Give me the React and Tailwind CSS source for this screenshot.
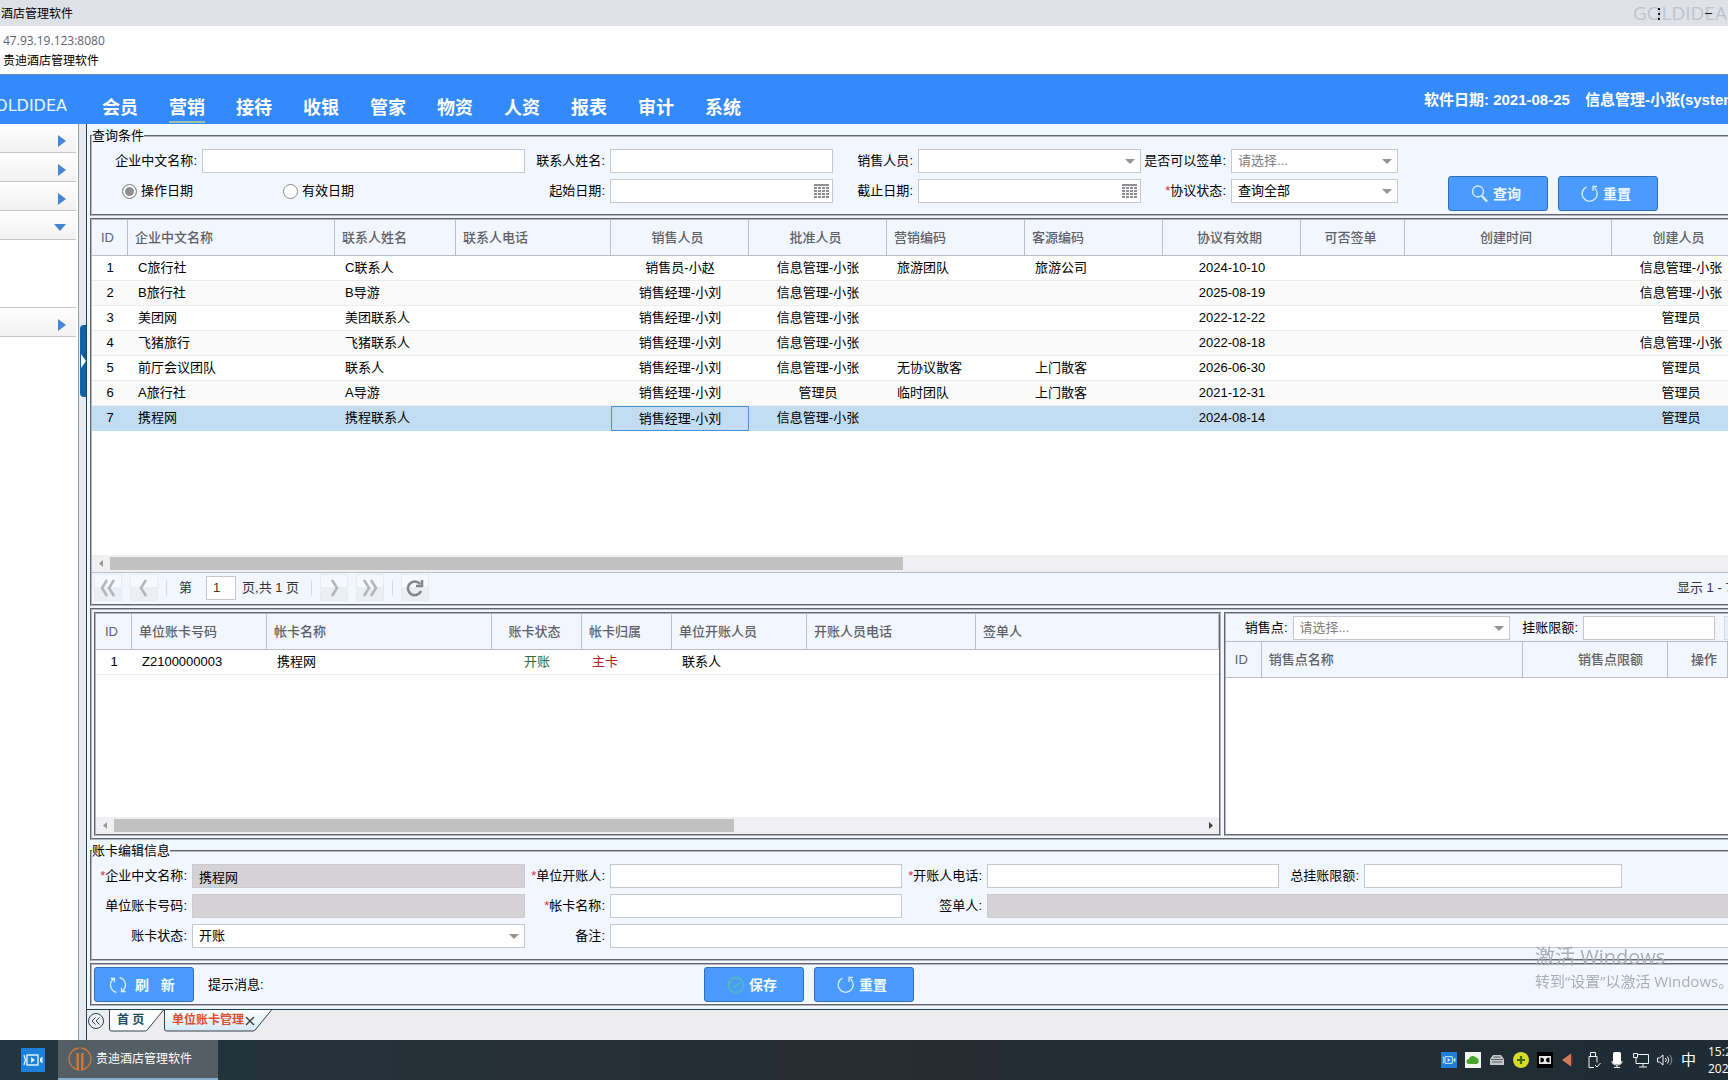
import React, { useState } from 'react'

const navItems = ['会员', '营销', '接待', '收银', '管家', '物资', '人资', '报表', '审计', '系统']

const agreementColumns = [
  { title: 'ID', width: 36, align: 'center' },
  { title: '企业中文名称', width: 207 },
  { title: '联系人姓名', width: 121 },
  { title: '联系人电话', width: 155 },
  { title: '销售人员', width: 138, align: 'center' },
  { title: '批准人员', width: 138, align: 'center' },
  { title: '营销编码', width: 138 },
  { title: '客源编码', width: 138 },
  { title: '协议有效期', width: 138, align: 'center' },
  { title: '可否签单', width: 104, align: 'center' },
  { title: '创建时间', width: 207, align: 'center' },
  { title: '创建人员', width: 138, align: 'center' },
]

const agreements = [
  ['1', 'C旅行社', 'C联系人', '', '销售员-小赵', '信息管理-小张', '旅游团队', '旅游公司', '2024-10-10', '', '', '信息管理-小张'],
  ['2', 'B旅行社', 'B导游', '', '销售经理-小刘', '信息管理-小张', '', '', '2025-08-19', '', '', '信息管理-小张'],
  ['3', '美团网', '美团联系人', '', '销售经理-小刘', '信息管理-小张', '', '', '2022-12-22', '', '', '管理员'],
  ['4', '飞猪旅行', '飞猪联系人', '', '销售经理-小刘', '信息管理-小张', '', '', '2022-08-18', '', '', '信息管理-小张'],
  ['5', '前厅会议团队', '联系人', '', '销售经理-小刘', '信息管理-小张', '无协议散客', '上门散客', '2026-06-30', '', '', '管理员'],
  ['6', 'A旅行社', 'A导游', '', '销售经理-小刘', '管理员', '临时团队', '上门散客', '2021-12-31', '', '', '管理员'],
  ['7', '携程网', '携程联系人', '', '销售经理-小刘', '信息管理-小张', '', '', '2024-08-14', '', '', '管理员'],
]

const cardColumns = [
  { title: 'ID', width: 36, align: 'center' },
  { title: '单位账卡号码', width: 135 },
  { title: '帐卡名称', width: 225 },
  { title: '账卡状态', width: 90, align: 'center', color: 'text-[#2f6b3a]' },
  { title: '帐卡归属', width: 90, color: 'text-[#b3222a]' },
  { title: '单位开账人员', width: 135 },
  { title: '开账人员电话', width: 169 },
  { title: '签单人' },
]

const cards = [['1', 'Z2100000003', '携程网', '开账', '主卡', '联系人', '', '']]

const pointColumns = [
  { title: 'ID', width: 36, align: 'center' },
  { title: '销售点名称' },
  { title: '销售点限额', width: 145, align: 'right' },
  { title: '操作', width: 60, align: 'end' },
]

const headAligns = { left: 'text-left pl-[7px]', center: 'text-center pr-1', right: 'text-right pr-6', end: 'text-right pr-2.5' }
const cellAligns = { left: 'text-left pl-2.5', center: 'text-center', right: 'text-right pr-6', end: 'text-right pr-2.5' }

const DataTable = ({ columns, rows, width, selected, focusCol, label }) => (
  <table aria-label={label} className='table-fixed w-full border-separate border-spacing-0 text-[13px] leading-[22px]' style={{ width }}>
    <colgroup>
      {columns.map((c) => <col key={c.title} style={{ width: c.width }} />)}
    </colgroup>
    <thead>
      <tr className='h-9 bg-[#f2f7ff] text-[#5f6166]'>
        {columns.map((c) => (
          <th key={c.title} className={`border-b border-r border-[#bcbec6] py-0 font-medium whitespace-nowrap ${headAligns[c.align || 'left']}`}>{c.title}</th>
        ))}
      </tr>
    </thead>
    <tbody>
      {rows.map((row, i) => (
        <tr key={row[0]} className={i === selected ? 'bg-[#c2dcf1]' : i % 2 ? 'bg-[#fafafa]' : 'bg-white'}>
          {row.map((cell, j) => (
            <td
              key={j}
              className={`h-[25px] py-0 whitespace-nowrap ${cellAligns[columns[j].align || 'left']} ${columns[j].color || 'text-black'} ${i === selected ? (j === focusCol ? 'border border-[#4a90d0]' : 'border-b border-[#c2dcf1]') : 'border-b border-[#ececec]'}`}
            >{cell}</td>
          ))}
        </tr>
      ))}
    </tbody>
  </table>
)

const ScrollBar = ({ thumb, rightArrow }) => (
  <div className='flex items-center h-[17px] shrink-0 bg-[#f0eff1]'>
    <svg className='w-[18px] h-[17px]' viewBox='0 0 18 17'><path d='M11 5v7l-4-3.500z' fill='#9a9a9a' /></svg>
    <div className='grow'><div className='h-[13px] bg-[#c1c1c1]' style={{ width: thumb }}></div></div>
    {rightArrow && <svg className='w-[17px] h-[17px]' viewBox='0 0 17 17'><path d='M7 5v7l4-3.500z' fill='#444' /></svg>}
  </div>
)

const Label = ({ htmlFor, required, children }) => (
  <label htmlFor={htmlFor} className='pr-[5px] text-right whitespace-nowrap'>
    {required && <span className='text-[#d03040]'>*</span>}{children}:
  </label>
)

const Input = ({ className = '', ...rest }) => (
  <input className={`block w-full min-w-0 h-6 px-1.5 border outline-none ${rest.disabled ? 'bg-[#d4d2d5] border-[#cbcbd0]' : 'bg-white border-[#c5c8d0]'} ${className}`} {...rest} />
)

const Select = ({ id, options, muted }) => (
  <div className='relative'>
    <select id={id} className={`block w-full h-6 px-1.5 appearance-none bg-white border border-[#c5c8d0] outline-none ${muted ? 'text-[#808080]' : 'text-black'}`}>
      {options.map((o) => <option key={o}>{o}</option>)}
    </select>
    <svg className='absolute right-1.5 top-2.5 w-2.5 h-[5px] pointer-events-none' viewBox='0 0 10 5'><path d='M0 0h10l-5 5z' fill='#939399' /></svg>
  </div>
)

const DateInput = ({ id }) => (
  <div className='relative'>
    <Input id={id} type='text' />
    <svg className='absolute right-1 top-[5px] w-[15px] h-[14px] pointer-events-none' viewBox='0 0 15 14' fill='#8e8e93'>
      <path d='M0 0h15v2H0z' />
      {[3, 6, 9, 12].map((y) => [0, 4, 8, 12].map((x) => <rect key={x + '-' + y} x={x} y={y} width='3' height='2' />))}
    </svg>
  </div>
)

const ResetIcon = () => (
  <svg className='w-[18px] h-[18px]' viewBox='0 0 18 18' fill='none' stroke='#d8f2ff' strokeWidth='1.3'>
    <path d='M5.500 2A7.500 7.500 0 1 0 13.500 3' />
    <path d='M16 1.500h-4v4.500' />
  </svg>
)

const SearchIcon = () => (
  <svg className='w-[18px] h-[18px]' viewBox='0 0 18 18' fill='none' stroke='#d8f2ff'>
    <circle cx='7' cy='6.500' r='5.500' strokeWidth='1.300' />
    <path d='M11 11l5 5.500' strokeWidth='2.400' />
  </svg>
)

const SaveIcon = () => (
  <svg className='w-[18px] h-[18px]' viewBox='0 0 18 18' fill='none' stroke='#4fbfae' strokeWidth='1.4'>
    <circle cx='9' cy='9' r='7.500' />
    <path d='M5.500 9l2.500 2.500 5-5' />
  </svg>
)

const RefreshIcon = () => (
  <svg className='w-[18px] h-[18px]' viewBox='0 0 18 18' fill='none' stroke='#d8f2ff' strokeWidth='1.3'>
    <path d='M7.500 16.300A7.500 7.500 0 0 1 4.500 3M1.500 2.500H5.500v4' />
    <path d='M10.500 1.700a7.500 7.500 0 0 1 3 13.300M16.500 15.500H12.500v-4' />
  </svg>
)

const BlueButton = ({ icon, children }) => (
  <button type='button' className='flex items-center justify-center gap-1 w-[100px] h-[35px] pr-1 rounded-[3px] border border-[#3070b8] bg-[#4a9aff] text-[14px] font-bold text-[#eefaff] whitespace-pre'>
    {icon}{children}
  </button>
)

const PagerButton = ({ label, d, dark }) => (
  <button type='button' aria-label={label} className='flex items-center justify-center w-7 h-[27px] border border-[#e6eaf1] bg-gradient-to-b from-[#f6f9ff] from-50% to-[#ebeef3] to-50%'>
    <svg className='w-[18px] h-[18px]' viewBox='0 0 18 18' fill='none' stroke={dark ? '#85868a' : '#b4b6bd'} strokeWidth='2.6'><path d={d} /></svg>
  </button>
)

const SideRow = ({ open, label }) => (
  <button type='button' aria-label={label} className='flex items-center justify-end w-[76px] h-[29px] pt-[5px] pr-2.5 border-b border-[#c4c5c9] bg-gradient-to-b from-white to-[#f1f1f2]'>
    {open
      ? <svg className='w-[12px] h-[7px]' viewBox='0 0 12 7'><path d='M0 0h12L6 7z' fill='#4385d6' /></svg>
      : <svg className='w-[8px] h-[12px]' viewBox='0 0 8 12'><path d='M0 0l8 6-8 6z' fill='#4385d6' /></svg>}
  </button>
)

const VideoIcon = ({ className }) => (
  <svg className={className} viewBox='0 0 24 24'>
    <rect width='24' height='24' rx='1' fill='#1f7fdb' />
    <path d='M3 7l1.500 5L3 17M6 7h11v10H6z' fill='none' stroke='#d9f4ff' strokeWidth='1.400' />
    <path d='M10 9l4 3-4 3zM19 10.500l2.500-2v7l-2.500-2z' fill='#d9f4ff' />
  </svg>
)

const Sidebar = () => (
  <aside className='flex shrink-0'>
    <div className='w-[79px] border-r border-[#929aa6] bg-white'>
      <SideRow label='菜单一' />
      <SideRow label='菜单二' />
      <SideRow label='菜单三' />
      <SideRow label='菜单四' open />
      <div className='w-[76px] h-[68px] border-b border-[#c4c5c9]'></div>
      <SideRow label='菜单五' />
    </div>
    <div className='w-2 border-r border-[#1f4254] bg-[#e7ebf1] pt-[201px] pl-px'>
      <button type='button' aria-label='展开' className='flex items-center justify-center w-1.5 h-[72px] rounded-l-sm bg-[#0f62a4]'>
        <svg className='w-[5px] h-[14px]' viewBox='0 0 5 14'><path d='M0 0l5 7-5 7z' fill='#fff' /></svg>
      </button>
    </div>
  </aside>
)

const panel = 'border-2 border-[#b4b6bf] [border-style:groove]'

const QueryForm = () => {
  const [dateType, setDateType] = useState('op')
  const radio = 'appearance-none w-[15px] h-[15px] rounded-full border border-[#8a8a8a] bg-white checked:bg-[#8f8f93] checked:shadow-[inset_0_0_0_2px_#fff]'

  return (
    <fieldset className={`min-w-0 border-r-0 bg-[#f2f7ff] ${panel}`}>
      <legend className='leading-[18px]'>查询条件</legend>
      <div className='flex items-start gap-[50px] pt-1 pb-[3px]'>
        <div className='grid grid-cols-[110px_323px_85px_223px_85px_223px_90px_167px] gap-y-1.5 items-center'>
          <Label htmlFor='company'>企业中文名称</Label>
          <Input id='company' />
          <Label htmlFor='contact'>联系人姓名</Label>
          <Input id='contact' />
          <Label htmlFor='seller'>销售人员</Label>
          <Select id='seller' options={['']} />
          <Label htmlFor='sign'>是否可以签单</Label>
          <Select id='sign' options={['请选择...']} muted />
          <div className='col-span-2 flex h-6 pl-[30px]'>
            <label className='flex items-center gap-1 w-[161px]'>
              <input type='radio' name='dateType' className={radio} checked={dateType === 'op'} onChange={() => setDateType('op')} />操作日期
            </label>
            <label className='flex items-center gap-1'>
              <input type='radio' name='dateType' className={radio} checked={dateType === 'valid'} onChange={() => setDateType('valid')} />有效日期
            </label>
          </div>
          <Label htmlFor='start'>起始日期</Label>
          <DateInput id='start' />
          <Label htmlFor='end'>截止日期</Label>
          <DateInput id='end' />
          <Label htmlFor='state' required>协议状态</Label>
          <Select id='state' options={['查询全部']} />
        </div>
        <div className='flex gap-2.5 pt-[27px]'>
          <BlueButton icon={<SearchIcon />}>查询</BlueButton>
          <BlueButton icon={<ResetIcon />}>重置</BlueButton>
        </div>
      </div>
    </fieldset>
  )
}

const Separator = () => <span className='w-px h-4 mx-2 bg-[#d5d9e1]'></span>

const Pager = () => (
  <div className='flex items-center justify-between h-8 shrink-0 pb-0.5 border-t border-[#bcbec6] bg-[#f2f7ff] pl-0.5 text-[#333]'>
    <div className='flex items-center'>
      <PagerButton label='首页' d='M8 1L3 9l5 8M15 1l-5 8 5 8' />
      <span className='w-2'></span>
      <PagerButton label='上一页' d='M11 1L6 9l5 8' />
      <Separator />
      <label htmlFor='page' className='px-1'>第</label>
      <Input id='page' defaultValue='1' className='ml-2.5 max-w-[30px]' />
      <span className='pl-1.5 pr-1 whitespace-nowrap'>页,共 1 页</span>
      <Separator />
      <PagerButton label='下一页' d='M7 1l5 8-5 8' />
      <span className='w-2'></span>
      <PagerButton label='末页' d='M3 1l5 8-5 8M10 1l5 8-5 8' />
      <Separator />
      <PagerButton label='刷新列表' d='M15 12A6.800 6.800 0 1 1 14 5M10 7H16V1' dark />
    </div>
    <span className='w-[51px] overflow-hidden whitespace-nowrap'>显示 1 - 7</span>
  </div>
)

const AccountForm = () => (
  <fieldset className={`min-w-0 border-r-0 bg-[#f2f7ff] ${panel}`}>
    <legend className='leading-[18px]'>账卡编辑信息</legend>
    <div className='grid grid-cols-[100px_333px_85px_292px_85px_292px_85px_258px_1fr] gap-y-1.5 items-center pt-1 pb-[11px]'>
      <Label htmlFor='unit' required>企业中文名称</Label>
      <Input id='unit' defaultValue='携程网' disabled />
      <Label htmlFor='opener' required>单位开账人</Label>
      <Input id='opener' />
      <Label htmlFor='phone' required>开账人电话</Label>
      <Input id='phone' />
      <Label htmlFor='limit'>总挂账限额</Label>
      <Input id='limit' />
      <span></span>
      <Label htmlFor='cardNo'>单位账卡号码</Label>
      <Input id='cardNo' disabled />
      <Label htmlFor='cardName' required>帐卡名称</Label>
      <Input id='cardName' />
      <Label htmlFor='signer'>签单人</Label>
      <div className='col-span-4'><Input id='signer' className='border-r-0' disabled /></div>
      <Label htmlFor='cardState'>账卡状态</Label>
      <Select id='cardState' options={['开账']} />
      <Label htmlFor='remark'>备注</Label>
      <div className='col-span-6'><Input id='remark' className='border-r-0' /></div>
    </div>
  </fieldset>
)

const TabBar = () => (
  <div className='flex h-[31px] border-t border-[#1f4254] bg-[#ededef] pl-px'>
    <button type='button' aria-label='向左滚动' className='mt-[3px] w-4 h-4'>
      <svg viewBox='0 0 16 16' fill='none' stroke='#274a5c'><circle cx='8' cy='8' r='7.500' /><path d='M7.500 4.500L4 8l3.500 3.500M11.500 4.500L8 8l3.500 3.500' /></svg>
    </button>
    <a href='#home' className='relative ml-[5px] w-[55px] h-[22px] pl-2 leading-[20px] text-[12px] font-bold text-[#1c4a63]'>
      <svg className='absolute inset-0 w-full h-full' viewBox='0 0 55 22'><path d='M.5 0v19q0 2 2 2H36q2 0 3-2L54.500 0' fill='#fbfcfd' stroke='#3a4046' /></svg>
      <span className='relative'>首 页</span>
    </a>
    <a href='#account' className='relative w-[108px] h-[22px] pl-2 leading-[20px] text-[12px] font-bold text-[#d9502f] whitespace-nowrap'>
      <svg className='absolute inset-0 w-full h-full' viewBox='0 0 108 22'>
        <defs><linearGradient id='tab' x1='0' y1='0' x2='0' y2='1'><stop offset='0' stopColor='#fff' /><stop offset='1' stopColor='#d3e9f6' /></linearGradient></defs>
        <path d='M.5 0v19q0 2 2 2H89q2 0 3-2L107.500 0' fill='url(#tab)' stroke='#3a4046' />
      </svg>
      <span className='relative'>单位账卡管理</span>
      <svg className='relative inline-block w-2.5 h-2.5 ml-px' viewBox='0 0 10 10'><path d='M1 1l8 8M9 1l-8 8' stroke='#444' strokeWidth='1.500' /></svg>
    </a>
  </div>
)

const Taskbar = () => (
  <footer className='flex justify-between h-10 shrink-0 bg-gradient-to-r from-[#24353f] via-[#252c32] to-[#1f2c35] text-white overflow-hidden'>
    <div className='flex items-center pl-[21px] gap-[13px]'>
      <VideoIcon className='w-6 h-6' />
      <button type='button' className='flex items-center gap-1 w-[160px] h-10 pl-2.5 border-b-2 border-[#86b0d2] bg-[#535e65] text-[12px] whitespace-nowrap'>
        <svg className='w-6 h-6' viewBox='0 0 24 24' fill='none' stroke='#c9763c'><circle cx='12' cy='12' r='11' strokeWidth='1.300' /><path d='M9.800 6v17M14.200 6v17' strokeWidth='2.800' /><path d='M12 0v24' stroke='#535e65' strokeWidth='1.600' /></svg>
        贵迪酒店管理软件
      </button>
    </div>
    <div className='flex items-center gap-2'>
      <VideoIcon className='w-4 h-4' />
      <svg className='w-4 h-4' viewBox='0 0 16 16'><path d='M0 0h16v16H0z' fill='#f0f7ea' /><path d='M4 12a2.500 2.500 0 0 1 0-5 4 4 0 0 1 7-1.500A3.500 3.500 0 0 1 12 12z' fill='#4aa32c' /></svg>
      <svg className='w-4 h-4' viewBox='0 0 16 16'><path d='M4 3h8l3 4v6H1V7z' fill='#c3c6cb' /><path d='M2 7.500h12M3 10h10M4.500 5h7' stroke='#5b5f66' /></svg>
      <svg className='w-4 h-4' viewBox='0 0 16 16'><circle cx='8' cy='8' r='8' fill='#d8da2a' /><path d='M8 4v8M4 8h8' stroke='#3f6a12' strokeWidth='2.200' /></svg>
      <svg className='w-4 h-4' viewBox='0 0 16 16'><path d='M0 0h16v16H0z' fill='#000' /><path d='M2 4h12v8H2z' fill='#e8e8e8' /><path d='M3.500 5.500q3.500 0 3.500 2.500t-3.500 2.500zM12.500 5.500Q9 5.500 9 8t3.500 2.500z' fill='#000' /></svg>
      <svg className='w-4 h-4' viewBox='0 0 16 16'><path d='M1 8l9-6.500v13z' fill='#d07a5e' /><path d='M10 1.500q4 6.500 0 13z' fill='#6b2f25' /></svg>
      <svg className='w-4 h-4' viewBox='0 0 16 16' fill='none' stroke='#f0f4f6'><path d='M5.500 .5h5v4h-5zM4 4.500h8v6M4 4.500v11h5M10 13l2 2 3.500-4' /></svg>
      <svg className='w-4 h-4' viewBox='0 0 16 16'><rect x='4' y='0' width='8' height='12' rx='1.500' fill='#fff' /><path d='M3 9q0 4 5 4t5-4M8 13v2.500M5 15.500h6' fill='none' stroke='#fff' /></svg>
      <svg className='w-4 h-4' viewBox='0 0 16 16' fill='none' stroke='#f0f4f6'><path d='M5 2.500h10.500v9H5M3 6v5.500h2M.5 1.500h4v4h-4zM10 11.500V15M6 15h8' /></svg>
      <svg className='w-4 h-4' viewBox='0 0 16 16' fill='none' stroke='#f0f4f6'><path d='M.5 6v4h2L6 13V3L2.500 6zM8.500 6q1.500 2 0 4M10.500 4.500q2.800 3.500 0 7' /><path d='M12.800 3q4 5 0 10' stroke='#8a949b' /></svg>
      <span className='text-[15px] leading-4'>中</span>
      <div className="w-[20px] ml-1 overflow-hidden font-['Open_Sans'] text-[12px] leading-[17px] whitespace-nowrap">15:23<br />2021/8/25</div>
    </div>
  </footer>
)

const App = () => {
  const [active, setActive] = useState('营销')

  return (
    <div className="flex flex-col min-h-screen overflow-hidden bg-white font-['Liberation_Sans','Noto_Sans_CJK_SC',sans-serif] text-[13px] leading-[18px] text-black">
      <div className='flex justify-between items-center h-[26px] bg-[#dee1e8] overflow-hidden'>
        <span className='pt-0.5 pl-px text-[12px]'>酒店管理软件</span>
        <div className="relative w-[95px] overflow-hidden font-['Open_Sans'] text-[19px] leading-[26px] text-[#bfc3ca] whitespace-nowrap">
          GOLDIDEA
          <svg className='absolute left-6 top-1.5 w-[62px] h-4' viewBox='0 0 62 16'><path d='M1 2h2v2H1zM1 7h2v2H1zM1 12h2v2H1z' fill='#111' /><path d='M48 7.500h7' stroke='#222' /></svg>
        </div>
      </div>
      <div className='h-12 pl-[3px] pt-[5px] text-[12px] leading-5'>
        <div className="font-['Open_Sans'] text-[#5f6368]">47.93.19.123:8080</div>
        <div>贵迪酒店管理软件</div>
      </div>

      <header className='flex h-[50px] border-t border-[#5f90c8] bg-[#348afa] text-white overflow-hidden'>
        <div className='flex justify-end w-[67px] shrink-0 pt-[21px] overflow-hidden'>
          <span className="font-['DejaVu_Sans',sans-serif] text-[16px] leading-[20px] text-[#e4f6ff]">GOLDIDEA</span>
        </div>
        <nav className='flex gap-[31px] pt-[19px] pl-[35px]'>
          {navItems.map((item) => (
            <a
              key={item}
              href='#nav'
              onClick={() => setActive(item)}
              className={`h-[29px] text-[18px] leading-7 font-bold whitespace-nowrap ${active === item ? 'border-b-2 border-[#9dbfa6]' : ''}`}
            >{item}</a>
          ))}
        </nav>
        <div className='flex gap-[15px] w-[304px] ml-auto pt-[15px] text-[15px] leading-5 font-bold whitespace-nowrap overflow-hidden'>
          <span>软件日期: 2021-08-25</span>
          <span>信息管理-小张(system)</span>
        </div>
      </header>

      <div className='flex grow'>
        <Sidebar />
        <div className='flex flex-col grow min-w-0'>
          <main className='flex flex-col grow gap-0.5 py-[3px] pl-[3px] bg-[#f0f8ff]'>
            <QueryForm />

            <section className={`flex flex-col grow border-r-0 bg-white overflow-hidden ${panel}`}>
              <DataTable label='协议单位' columns={agreementColumns} rows={agreements} width={1658} selected={6} focusCol={4} />
              <div className='grow'></div>
              <ScrollBar thumb='49%' />
              <Pager />
            </section>

            <section className={`flex gap-[3px] border-r-0 py-0.5 pl-0.5 ${panel}`}>
              <div className={`flex flex-col grow-[1127] basis-0 min-w-0 h-56 bg-white overflow-hidden ${panel}`}>
                <DataTable label='单位账卡' columns={cardColumns} rows={cards} />
                <div className='grow'></div>
                <ScrollBar thumb='57%' rightArrow />
              </div>
              <div className={`grow-[504] basis-0 min-w-0 h-56 border-r-0 bg-white overflow-hidden ${panel}`}>
                <div className='flex items-center h-7 pl-[19px] border-b border-[#bcbec6] bg-[#f2f7ff]'>
                  <Label htmlFor='point'>销售点</Label>
                  <div className='grow'><Select id='point' options={['请选择...']} muted /></div>
                  <span className='w-3'></span>
                  <Label htmlFor='pointLimit'>挂账限额</Label>
                  <Input id='pointLimit' className='max-w-[132px]' />
                  <button type='button' aria-label='添加' className='w-1 h-6 ml-[9px] shrink-0 border-y border-l border-[#d5d9e1] bg-[#ebeef3]'></button>
                </div>
                <DataTable label='销售点' columns={pointColumns} rows={[]} />
              </div>
            </section>

            <AccountForm />

            <section className={`flex items-center border-r-0 py-0.5 pl-0.5 bg-[#f2f7ff] ${panel}`}>
              <BlueButton icon={<RefreshIcon />}> 刷   新</BlueButton>
              <span className='w-[496px] pl-3.5'>提示消息:</span>
              <div className='flex gap-2.5 pl-3.5'>
                <BlueButton icon={<SaveIcon />}>保存</BlueButton>
                <BlueButton icon={<ResetIcon />}>重置</BlueButton>
              </div>
            </section>
          </main>
          <TabBar />
        </div>
      </div>

      <Taskbar />

      <div className="fixed right-0 bottom-[88px] w-[193px] overflow-hidden font-['Open_Sans','Noto_Sans_CJK_SC',sans-serif] text-[#a9adb5] whitespace-nowrap pointer-events-none">
        <div className='text-[20px] leading-[26px]'>激活 Windows</div>
        <div className='text-[15px] leading-[22px]'>转到“设置”以激活 Windows。</div>
      </div>
    </div>
  )
}

export default App
